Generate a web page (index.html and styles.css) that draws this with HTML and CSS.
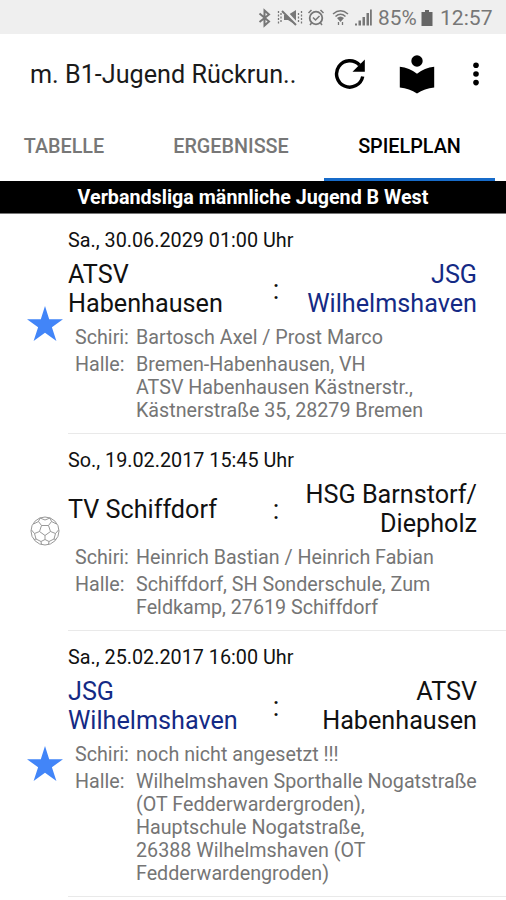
FILE: index.html
```html
<!DOCTYPE html>
<html lang="de">
<head>
<meta charset="utf-8">
<title>Spielplan</title>
<link rel="stylesheet" href="styles.css">
</head>
<body>
<svg width="0" height="0" class="defs">
  <symbol id="star" viewBox="0 0 36 36"><path fill="#4285f8" d="M18 0 22.2 13.2H36L24.9 21.3 29.4 35 18 26.8 6.6 35 11.1 21.3 0 13.2H13.8Z"/></symbol>
</svg>
<header class="status">
  <svg class="status-icons" width="124" height="20" viewBox="0 0 124 20" fill="none" stroke="#777">
    <path stroke-width="2" d="M2.500 5.500 12 13.500 7.500 17.500V2.500l4.500 4L2.500 14"/>
    <path stroke-width="1.300" stroke-dasharray="2 1.500" d="M21.500 3v13M24 5v9M44.500 3v13M41.500 5v9"/>
    <path fill="#777" stroke="none" d="M27 7h4l8-5v15l-8-5h-4z"/>
    <path stroke="#efefef" stroke-width="3" d="M27 2 40 16"/><path stroke-width="2" d="M25 3 39 17"/>
    <circle cx="59" cy="10" r="6.300" stroke-width="1.800"/><path stroke-width="1.500" d="m56 9.500 2.500 2.500 4-4M51.500 5l3-3M66.500 5l-3-3M54.500 15l-1.500 2M63.500 15l1.500 2"/>
    <path stroke-width="1.500" d="M76 6Q83.500 -.5 91 6M78.500 8.500Q83.500 4 88.500 8.500"/><path fill="#777" stroke="none" d="M80 10Q83.500 7 87 10L83.500 14z"/><path stroke-width="1.300" d="M81.500 14v3M85.500 14v3"/>
    <path fill="#777" stroke="none" d="M98 15.500h2v2h-2zM101.500 12.500h2.500v5h-2.500zM105.500 9h2.500v8.500h-2.500zM109.500 5h2.500v12.500h-2.500zM113 1.500h1.800v16H113z"/>
  </svg>
  <span class="percent">85%</span>
  <svg class="battery" width="12" height="16" viewBox="0 0 12 16"><path fill="#666" d="M4 0h4v2h3.500v14H.5V2H4z"/></svg>
  <time class="clock">12:57</time>
</header>
<div class="appbar">
  <h1>m. B1-Jugend Rückrun..</h1>
  <svg class="refresh" width="32" height="32" viewBox="0 0 32 32"><path fill="none" stroke="#000" stroke-width="3.400" d="M25.500 7A13.200 13.200 0 1 0 28.700 18.500"/><path d="M30.800 1.500V13.800H18.500z"/></svg>
  <svg class="reader" width="36" height="40" viewBox="0 0 36 40"><circle cx="18" cy="7" r="5.700"/><path d="M.8 12.800Q10.500 13.800 18 19.800 25.500 13.800 35.200 12.800V33.500Q25.500 34.500 18 39.500 10.500 34.500.8 33.500Z"/></svg>
  <svg class="more" width="8" height="24" viewBox="0 0 8 24"><circle cx="4" cy="3.200" r="2.800"/><circle cx="4" cy="12" r="2.800"/><circle cx="4" cy="20.600" r="2.800"/></svg>
</div>
<nav class="tabs">
  <a class="tab first">TABELLE</a>
  <a class="tab second">ERGEBNISSE</a>
  <a class="tab active">SPIELPLAN</a>
</nav>
<h2 class="league">Verbandsliga männliche Jugend B West</h2>
<main>
  <article class="match">
    <div class="mark"><svg width="36" height="36"><use href="#star"/></svg></div>
    <div class="body">
      <div class="date">Sa., 30.06.2029 01:00 Uhr</div>
      <div class="teams"><span>ATSV Habenhausen</span><span class="colon">:</span><span class="away own">JSG Wilhelmshaven</span></div>
      <dl>
        <dt>Schiri:</dt><dd>Bartosch Axel / Prost Marco</dd>
        <dt>Halle:</dt><dd>Bremen-Habenhausen, VH<br>ATSV Habenhausen Kästnerstr.,<br>Kästnerstraße 35, 28279 Bremen</dd>
      </dl>
    </div>
  </article>
  <article class="match">
    <div class="mark"><svg class="ball" width="30" height="30" viewBox="0 0 30 30" fill="none" stroke="#999" stroke-width="1"><circle cx="15" cy="15" r="14"/><path d="M15 19.500 9.500 15.500 11.500 9.500H18.500L20.500 15.500Z M9.500 15.500 4.500 17.500 1.500 14M20.500 15.500 25.500 17.500 28.500 14M11.500 9.500 8.500 5.500 10 2M18.500 9.500 21.500 5.500 20 2M8.500 5.500 3.500 8M21.500 5.500 26.500 8M4.500 17.500 6 23 11 25.500 15 23.500 19 25.500 24 23 25.500 17.500M15 23.500V19.500M11 25.500 11.500 28.500M19 25.500 18.500 28.500M6 23 4 23.500M24 23 26 23.500M10 2 15 4 20 2"/></svg></div>
    <div class="body">
      <div class="date">So., 19.02.2017 15:45 Uhr</div>
      <div class="teams"><span>TV Schiffdorf</span><span class="colon">:</span><span class="away">HSG Barnstorf/<wbr>Diepholz</span></div>
      <dl>
        <dt>Schiri:</dt><dd>Heinrich Bastian / Heinrich Fabian</dd>
        <dt>Halle:</dt><dd>Schiffdorf, SH Sonderschule, Zum<br>Feldkamp, 27619 Schiffdorf</dd>
      </dl>
    </div>
  </article>
  <article class="match">
    <div class="mark"><svg width="36" height="36"><use href="#star"/></svg></div>
    <div class="body">
      <div class="date">Sa., 25.02.2017 16:00 Uhr</div>
      <div class="teams"><span class="own">JSG Wilhelmshaven</span><span class="colon">:</span><span class="away">ATSV Habenhausen</span></div>
      <dl>
        <dt>Schiri:</dt><dd>noch nicht angesetzt !!!</dd>
        <dt>Halle:</dt><dd>Wilhelmshaven Sporthalle Nogatstraße<br>(OT Fedderwardergroden),<br>Hauptschule Nogatstraße,<br>26388 Wilhelmshaven (OT<br>Fedderwardengroden)</dd>
      </dl>
    </div>
  </article>
</main>
</body>
</html>
```
FILE: styles.css
```css
* { box-sizing: border-box; }
body { margin: 0; height: 900px; overflow: hidden; background: #fff; color: #111; font-family: Roboto, sans-serif; font-size: 19.8px; }
h1, h2, dl, dd { margin: 0; font-weight: 400; }
svg { display: block; flex: none; }
.defs { display: none; }
.status { display: flex; align-items: center; height: 34px; padding: 1px 0 0 257px; background: #efefef; color: #777; white-space: nowrap; }
.percent { width: 42px; margin-left: -3px; font-size: 20.8px; }
.battery { margin-left: 1px; }
.clock { margin-left: 7px; font-size: 21.1px; }
.appbar { display: flex; align-items: center; height: 80px; padding-left: 30px; }
h1 { width: 304px; padding-top: 1px; font-size: 25.2px; color: #1a1a1a; white-space: nowrap; }
.reader { margin-left: 33px; }
.more { margin-left: 37px; }
.tabs { display: flex; height: 67px; line-height: 66px; font-size: 19.8px; font-weight: 500; color: #777; }
.tab { text-align: center; }
.first { width: 128px; }
.second { width: 196px; padding-left: 10px; }
.active { width: 171px; color: #000; border-bottom: 3px solid #176bc9; }
.league { height: 33px; border-bottom: 1px solid #777; background: #000; color: #fff; font-size: 19.7px; font-weight: 700; line-height: 34px; text-align: center; }
.match { display: flex; }
.mark { display: flex; align-items: center; justify-content: center; width: 46px; margin-left: 22px; }
.ball { margin-bottom: 2px; }
.body { flex: 1; padding: 15px 0 10.5px; border-bottom: 1px solid #e9e9e9; }
.date { line-height: 24px; }
.teams { display: grid; grid-template-columns: 192px 32px 185px; align-items: center; min-height: 59.2px; margin-top: 6.8px; font-size: 25.2px; line-height: 29.6px; }
.colon { padding-top: 3px; font-size: 27px; text-align: center; }
.away { text-align: right; }
.own { color: #142a85; }
dl { display: grid; grid-template-columns: 61px 1fr; row-gap: 3.7px; margin-top: 7px; padding-left: 7px; color: #757575; font-size: 19.7px; line-height: 23.2px; white-space: nowrap; }
```
